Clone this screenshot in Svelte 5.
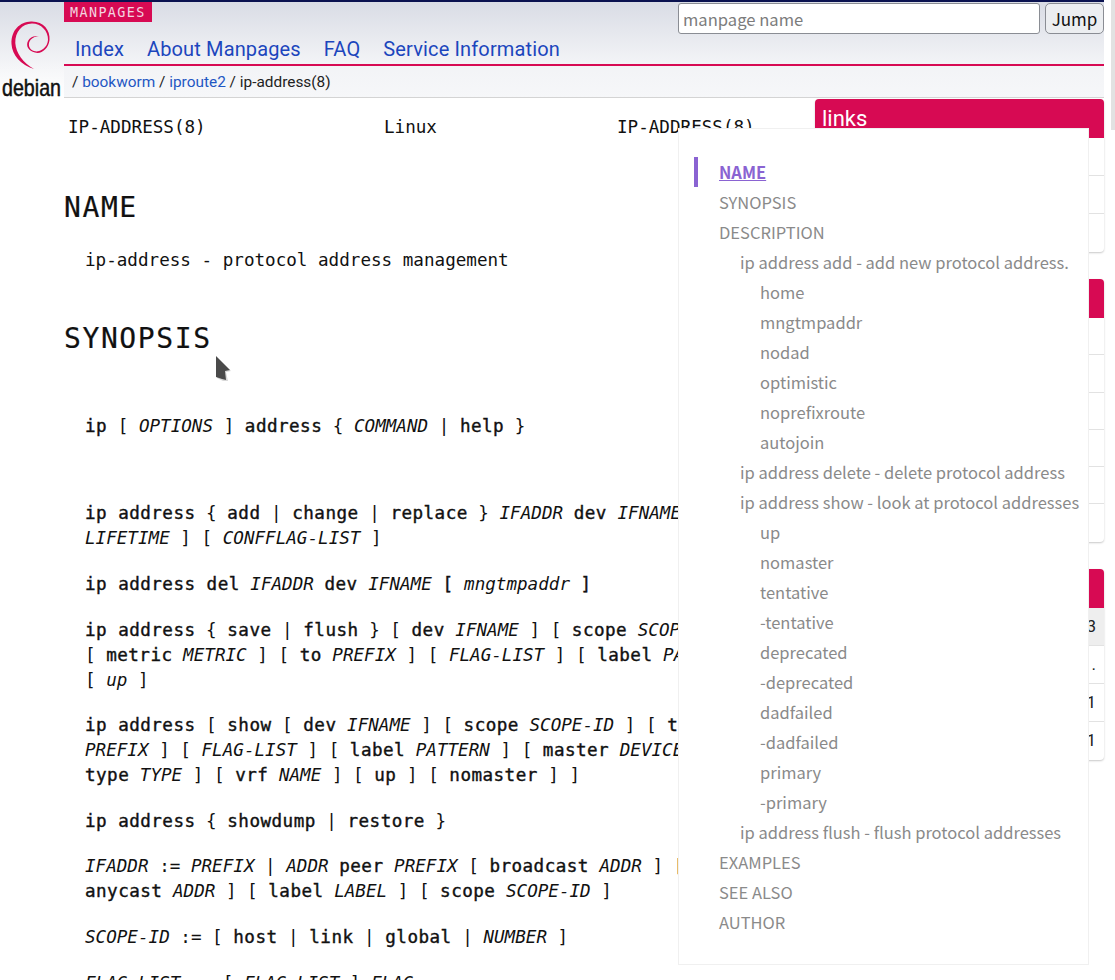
<script>
  const toc = [
    { label: 'NAME', level: 1, active: true },
    { label: 'SYNOPSIS', level: 1 },
    { label: 'DESCRIPTION', level: 1 },
    { label: 'ip address add - add new protocol address.', level: 2 },
    { label: 'home', level: 3 },
    { label: 'mngtmpaddr', level: 3 },
    { label: 'nodad', level: 3 },
    { label: 'optimistic', level: 3 },
    { label: 'noprefixroute', level: 3 },
    { label: 'autojoin', level: 3 },
    { label: 'ip address delete - delete protocol address', level: 2 },
    { label: 'ip address show - look at protocol addresses', level: 2 },
    { label: 'up', level: 3 },
    { label: 'nomaster', level: 3 },
    { label: 'tentative', level: 3 },
    { label: '-tentative', level: 3 },
    { label: 'deprecated', level: 3 },
    { label: '-deprecated', level: 3 },
    { label: 'dadfailed', level: 3 },
    { label: '-dadfailed', level: 3 },
    { label: 'primary', level: 3 },
    { label: '-primary', level: 3 },
    { label: 'ip address flush - flush protocol addresses', level: 2 },
    { label: 'EXAMPLES', level: 1 },
    { label: 'SEE ALSO', level: 1 },
    { label: 'AUTHOR', level: 1 }
  ];

  const navLinks = ['Index', 'About Manpages', 'FAQ', 'Service Information'];

  const panels = [
    { title: 'links', rows: ['language-indep link', 'package tracker', 'raw man page'] },
    { title: 'table of contents', dense: true, rows: ['NAME', 'SYNOPSIS', 'DESCRIPTION', 'EXAMPLES', 'SEE ALSO', 'AUTHOR'] },
    { title: 'other versions', versions: true, rows: ['bookworm 6.1.0-3', '', 'testing 6.15.0-1', 'unstable 6.15.0-1'] }
  ];
</script>

<div class="page">
  <header class="top">
    <a class="logo" href="#top" aria-label="Debian">
      <svg width="64" height="97" viewBox="0 0 64 97">
        <path class="swirl" d="M34 68 C21 64 12 54 11.5 43 C11 29 20 21 31 20.5 C43 20 50.5 29 49.5 39 C48.5 48 41 53.5 35 51.5 C28.5 50 25.5 45 28 40 C30 36 35 34 39 36 C35 35 31 37 29.3 41 C28 45 30 49.5 35 50.3 C40 51 47.5 47 48 39 C48.5 30 41 22.5 32 22.5 C22 22.5 15 31 15.3 42 C16 52 23 62 34 68 Z" />
        <text x="2" y="95" textLength="59" lengthAdjust="spacingAndGlyphs">debian</text>
      </svg>
    </a>
    <div class="top-main">
      <div class="tab-row">
        <span class="tab">MANPAGES</span>
        <form class="jump">
          <input type="text" placeholder="manpage name" />
          <button type="button">Jump</button>
        </form>
      </div>
      <nav class="nav">
        {#each navLinks as link}
          <a href="#top">{link}</a>
        {/each}
      </nav>
      <div class="crumbs">
        / <a href="#top">bookworm</a> / <a href="#top">iproute2</a> / ip-address(8)
      </div>
    </div>
  </header>

  <div class="body">
    <main class="man">
      <div class="man-head">
        <span>IP-ADDRESS(8)</span>
        <span>Linux</span>
        <span>IP-ADDRESS(8)</span>
      </div>

      <h1 class="h-name">NAME</h1>
      <p class="one">ip-address - protocol address management</p>

      <h1 class="h-syn">SYNOPSIS</h1>
      <p class="first"><b>ip</b> [ <i>OPTIONS</i> ] <b>address</b> &#123; <i>COMMAND</i> | <b>help</b> &#125;</p>

      <p class="second"><b>ip address</b> &#123; <b>add</b> | <b>change</b> | <b>replace</b> &#125; <i>IFADDR</i> <b>dev</b> <i>IFNAME</i> [<br /><i>LIFETIME</i> ] [ <i>CONFFLAG-LIST</i> ]</p>
      <p><b>ip address del</b> <i>IFADDR</i> <b>dev</b> <i>IFNAME</i> <b>[</b> <i>mngtmpaddr</i> <b>]</b></p>
      <p><b>ip address</b> &#123; <b>save</b> | <b>flush</b> &#125; [ <b>dev</b> <i>IFNAME</i> ] [ <b>scope</b> <i>SCOPE-ID</i> ]<br />[ <b>metric</b> <i>METRIC</i> ] [ <b>to</b> <i>PREFIX</i> ] [ <i>FLAG-LIST</i> ] [ <b>label</b> <i>PATTERN</i> ]<br />[ <i>up</i> ]</p>
      <p><b>ip address</b> [ <b>show</b> [ <b>dev</b> <i>IFNAME</i> ] [ <b>scope</b> <i>SCOPE-ID</i> ] [ <b>to</b><br /><i>PREFIX</i> ] [ <i>FLAG-LIST</i> ] [ <b>label</b> <i>PATTERN</i> ] [ <b>master</b> <i>DEVICE</i> ] [<br /><b>type</b> <i>TYPE</i> ] [ <b>vrf</b> <i>NAME</i> ] [ <b>up</b> ] [ <b>nomaster</b> ] ]</p>
      <p><b>ip address</b> &#123; <b>showdump</b> | <b>restore</b> &#125;</p>
      <p><i>IFADDR</i> := <i>PREFIX</i> | <i>ADDR</i> <b>peer</b> <i>PREFIX</i> [ <b>broadcast</b> <i>ADDR</i> ] [<br /><b>anycast</b> <i>ADDR</i> ] [ <b>label</b> <i>LABEL</i> ] [ <b>scope</b> <i>SCOPE-ID</i> ]</p>
      <p><i>SCOPE-ID</i> := [ <b>host</b> | <b>link</b> | <b>global</b> | <i>NUMBER</i> ]</p>
      <p><i>FLAG-LIST</i> := [ <i>FLAG-LIST</i> ] <i>FLAG</i></p>
    </main>

    <aside class="side">
      {#each panels as panel}
        <section class="panel">
          <h2>{panel.title}</h2>
          <ul>
            {#each panel.rows as row, i}
              <li class:dense={panel.dense} class:versions={panel.versions} class:current={panel.versions && i === 0}>{row || '.'}</li>
            {/each}
          </ul>
        </section>
      {/each}
    </aside>
  </div>

  <div class="popup">
    <ul>
      {#each toc as item}
        <li class="lvl{item.level}" class:active={item.active}><a href="#top">{item.label}</a></li>
      {/each}
    </ul>
  </div>

  <svg class="cursor" width="20" height="28" viewBox="0 0 20 28">
    <polygon class="cursor-shadow" points="2,2 16,16 11,17 13,26 8,26 2,23" />
    <polygon class="cursor-arrow" points="1,1 15,15 10,16 11,25 7,24 1,22" />
  </svg>
  <div class="thumb"></div>
</div>

<style>
  :global(body) {
    background: #fff;
  }

  .page {
    position: relative;
    height: 980px;
    overflow: hidden;
    background: #fff;
    color: #111;
    font-family: Roboto, sans-serif;
  }

  /* Header */
  .top {
    display: flex;
    height: 98px;
    box-sizing: border-box;
    margin-right: 11px;
    border-top: 2px solid #0a1250;
    background: linear-gradient(#d9dce5, #f2f3f6 62%, #f6f7f9);
  }

  .logo {
    width: 64px;
    flex: none;
    margin-top: -1px;
    background: linear-gradient(transparent 60px, #fff 96px);
  }

  .swirl {
    fill: #d70a53;
  }

  .logo text {
    font-family: 'Liberation Sans', sans-serif;
    font-size: 24px;
    fill: #111;
    stroke: #111;
    stroke-width: 0.5;
  }

  .top-main {
    flex: 1;
    display: flex;
    flex-direction: column;
    border-bottom: 1px solid #d4d4d4;
  }

  .tab-row {
    display: flex;
    justify-content: space-between;
    align-items: flex-start;
    height: 30px;
  }

  .tab {
    background: #d70a53;
    color: #f3d5e0;
    letter-spacing: 1.4px;
    line-height: 19px;
    padding: 1px 6px 0;
    font-family: 'DejaVu Sans Mono', monospace;
    font-size: 13.4px;
  }

  .jump {
    display: flex;
    gap: 5px;
    padding-top: 1px;
  }

  .jump input {
    width: 362px;
    height: 31px;
    box-sizing: border-box;
    border: 1px solid #8a8d94;
    border-radius: 3px;
    padding: 0 4px;
    font-family: 'Noto Sans CJK SC', sans-serif;
    font-size: 16.6px;
    background: #fff;
  }

  .jump input::placeholder {
    color: #7c7c7c;
  }

  .jump button {
    width: 59px;
    height: 31px;
    border: 1px solid #8a8d94;
    border-radius: 5px;
    background: #eceef1;
    color: #111;
    font-family: 'Noto Sans CJK SC', sans-serif;
    font-size: 17px;
    padding: 0;
  }

  .nav {
    display: flex;
    gap: 23px;
    height: 34px;
    box-sizing: border-box;
    padding-left: 11px;
    border-bottom: 2px solid #d70a53;
    font-size: 20px;
    line-height: 34px;
  }

  .nav a {
    color: #1c46bd;
    text-decoration: none;
    letter-spacing: 0.14px;
  }

  .crumbs {
    padding-left: 8px;
    font-size: 15.4px;
    line-height: 32px;
    color: #222;
  }

  .crumbs a {
    color: #1f57c3;
    text-decoration: none;
  }

  /* Man page + sidebar */
  .body {
    display: flex;
    padding-left: 64px;
    gap: 10px;
  }

  .man {
    width: 741px;
    flex: none;
    font-family: 'DejaVu Sans Mono', monospace;
    font-size: 17.6px;
    line-height: 25px;
    white-space: nowrap;
    overflow: hidden;
  }

  .man-head {
    display: flex;
    padding: 17px 0 0 4px;
  }

  .man-head span:nth-child(1) {
    width: 316px;
  }

  .man-head span:nth-child(2) {
    width: 233px;
  }

  h1 {
    font-size: 28px;
    font-weight: 400;
    letter-spacing: 1.6px;
    line-height: 34px;
    margin: 0;
    -webkit-text-stroke: 0.2px #111;
  }

  .h-name {
    margin-top: 51px;
  }

  .h-syn {
    margin-top: 49px;
  }

  p {
    margin: 20.6px 0 0 21px;
  }

  p.one {
    margin-top: 23px;
  }

  p.first {
    margin-top: 58px;
  }

  p.second {
    margin-top: 62.4px;
  }

  /* the page's bold is a faux bold: regular glyphs, a bit wider and thicker */
  b {
    font-weight: 400;
    letter-spacing: 0.46px;
    -webkit-text-stroke: 0.4px #111;
  }

  .side {
    width: 289px;
    flex: none;
    padding-top: 1px;
  }

  .panel {
    margin-bottom: 27px;
    border-radius: 4px;
    background: #fff;
    box-shadow: 0 1px 2px rgba(0, 0, 0, 0.22);
    overflow: hidden;
  }

  .panel h2 {
    margin: 0;
    height: 39px;
    padding-left: 7px;
    background: #d70a53;
    color: #fff;
    font-size: 22px;
    font-weight: 400;
    line-height: 39px;
  }

  .panel ul {
    list-style: none;
    margin: 0;
    padding: 0;
  }

  .panel li {
    height: 38px;
    box-sizing: border-box;
    line-height: 37px;
    padding: 0 8px;
    font-size: 16px;
    border-bottom: 1px solid #e2e2e2;
  }

  .panel li.dense {
    height: 37.3px;
  }

  .panel li:last-child {
    border-bottom: none;
  }

  .panel li.versions {
    text-align: right;
    color: #222;
    font-size: 17px;
  }

  .panel li.current {
    background: #eeeeee;
  }

  /* Table of contents overlay */
  .popup {
    position: absolute;
    left: 678px;
    top: 128px;
    width: 411px;
    height: 837px;
    box-sizing: border-box;
    background: #fff;
    border: 1px solid #f0f0f0;
    padding-top: 28px;
    font-family: 'Noto Sans CJK SC', sans-serif;
    font-size: 16.5px;
  }

  .popup ul {
    list-style: none;
    margin: 0;
    padding: 0;
  }

  .popup li {
    position: relative;
    height: 30px;
    line-height: 30px;
    white-space: nowrap;
  }

  .popup a {
    color: #8a8a8a;
    text-decoration: none;
  }

  .lvl1 {
    padding-left: 40px;
  }

  .lvl2 {
    padding-left: 61px;
  }

  .lvl3 {
    padding-left: 81px;
  }

  .popup li.active a {
    color: #8a63d2;
    font-weight: 700;
    text-decoration: underline;
  }

  .popup li.active::before {
    content: '';
    position: absolute;
    left: 15px;
    top: 0;
    width: 4px;
    height: 30px;
    background: #8a63d2;
  }

  .cursor {
    position: absolute;
    left: 215px;
    top: 355px;
  }

  .cursor-shadow {
    fill: #d8d8d8;
  }

  .cursor-arrow {
    fill: #4a4a4a;
  }

  .thumb {
    position: absolute;
    right: 0;
    top: 0;
    width: 4px;
    height: 130px;
    background: #e2e2e2;
  }
</style>
